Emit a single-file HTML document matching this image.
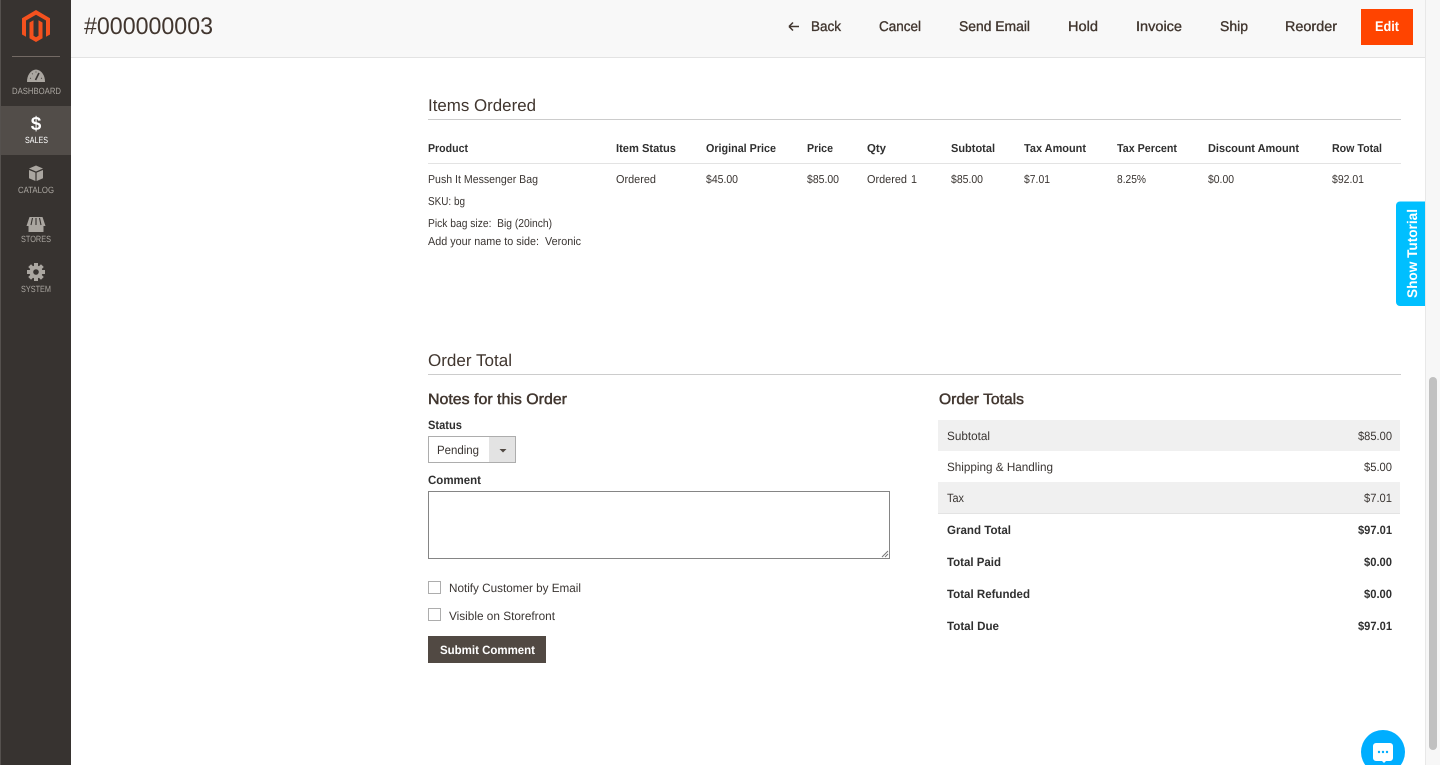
<!DOCTYPE html>
<html><head><meta charset="utf-8"><title>#000000003</title>
<style>
html,body{margin:0;padding:0;background:#fff;overflow:hidden;width:1440px;height:765px}
svg{display:block}
text{font-family:"Liberation Sans",sans-serif;fill:#41362f;text-rendering:geometricPrecision}
.t{font-size:11.5px;fill:#3a3532}
.b{font-size:11.5px;font-weight:700;fill:#303030}
.n{font-size:14px;fill:#41362f;stroke:#41362f;stroke-width:.35px}
.h{font-size:17px;fill:#41362f}
.s{font-size:15px;fill:#41362f;stroke:#41362f;stroke-width:.45px}
.l{font-size:12px;fill:#3a3532}
.lb{font-size:12px;font-weight:700;fill:#303030}
.m{font-size:9px;fill:#aaa6a0}
</style></head><body>
<svg width="1440" height="765" viewBox="0 0 1440 765" xmlns="http://www.w3.org/2000/svg">
<rect width="1440" height="765" fill="#fff"/>
<!-- scrollbar -->
<rect x="1425" y="0" width="15" height="765" fill="#f7f7f7"/>
<rect x="1425" y="0" width="1" height="765" fill="#e8e8e8"/>
<rect x="1429" y="377" width="8" height="373" rx="4" fill="#c1c1c1"/>
<!-- header -->
<rect x="71" y="0" width="1354" height="57" fill="#f8f8f8"/>
<rect x="71" y="57" width="1354" height="1" fill="#e3e3e3"/>
<text x="84" y="34" font-size="24" textLength="129" lengthAdjust="spacingAndGlyphs" style="fill:#41362f">#000000003</text>
<path d="M789 26.500H799M789 26.500L793 22.500M789 26.500L793 30.500" stroke="#41362f" stroke-width="1.500" fill="none"/>
<text class="n" x="811" y="31" textLength="30" lengthAdjust="spacingAndGlyphs">Back</text>
<text class="n" x="879" y="31" textLength="42" lengthAdjust="spacingAndGlyphs">Cancel</text>
<text class="n" x="959" y="31" textLength="71" lengthAdjust="spacingAndGlyphs">Send Email</text>
<text class="n" x="1068" y="31" textLength="30" lengthAdjust="spacingAndGlyphs">Hold</text>
<text class="n" x="1136" y="31" textLength="46" lengthAdjust="spacingAndGlyphs">Invoice</text>
<text class="n" x="1220" y="31" textLength="28" lengthAdjust="spacingAndGlyphs">Ship</text>
<text class="n" x="1285" y="31" textLength="52" lengthAdjust="spacingAndGlyphs">Reorder</text>
<rect x="1361" y="9" width="52" height="36" fill="#ff4400"/>
<text x="1375" y="31" font-size="14" font-weight="700" textLength="24" lengthAdjust="spacingAndGlyphs" style="fill:#fff">Edit</text>
<!-- sidebar -->
<rect x="0" y="0" width="71" height="765" fill="#373330"/>
<rect x="0" y="0" width="1" height="765" fill="#55514e"/>
<rect x="1" y="106" width="70" height="49" fill="#524d49"/>
<path d="M36 10L50 18.200V34.500L46 36.800V20.500L36 14.700L26 20.500V36.800L22 34.500V18.200Z" fill="#f4511e"/>
<path d="M36 42L29.500 38.200V22.500L33.500 20.200V35.800L36 37.300L38.500 35.800V20.200L42.500 22.500V38.200Z" fill="#f4511e"/>
<rect x="12" y="56" width="48" height="1" fill="#736a64"/>
<!-- dashboard icon -->
<path d="M27 82A9.500 12 0 0 1 36 69.500A9.500 12 0 0 1 45 82Z" fill="#aaa6a0"/>
<path d="M35.500 80L39 73" stroke="#373330" stroke-width="1.600"/>
<path d="M30 78.500L31 78M32 73.500L32.700 74.200M36 71.500V72.500M42 78.500L41 78" stroke="#373330" stroke-width=".8"/>
<text class="m" x="12" y="94" textLength="49" lengthAdjust="spacingAndGlyphs">DASHBOARD</text>
<!-- sales -->
<text x="36" y="130" font-size="19" font-weight="700" text-anchor="middle" style="fill:#fff">$</text>
<text class="m" x="25" y="143" textLength="23" lengthAdjust="spacingAndGlyphs" style="fill:#fff">SALES</text>
<!-- catalog -->
<path d="M36 165.500L43 168.500L36 171.500L29 168.500Z" fill="#aaa6a0"/>
<path d="M29 170L35.400 172.600V181L29 178.200Z" fill="#aaa6a0"/>
<path d="M43 170L36.600 172.600V181L43 178.200Z" fill="#aaa6a0"/>
<text class="m" x="18" y="193" textLength="36" lengthAdjust="spacingAndGlyphs">CATALOG</text>
<!-- stores -->
<path d="M29.500 217H42.500L45.500 226H26.500Z" fill="#aaa6a0"/>
<path d="M32.500 218L31 225M36 218V225M39.500 218L41 225" stroke="#373330" stroke-width="1.100"/>
<rect x="28.500" y="226" width="15" height="6" fill="#aaa6a0"/>
<text class="m" x="21" y="242" textLength="30" lengthAdjust="spacingAndGlyphs">STORES</text>
<!-- system -->
<g transform="translate(36 272)">
<circle r="6.500" fill="#aaa6a0"/>
<g fill="#aaa6a0"><rect x="-2" y="-9" width="4" height="18"/><rect x="-2" y="-9" width="4" height="18" transform="rotate(45)"/><rect x="-2" y="-9" width="4" height="18" transform="rotate(90)"/><rect x="-2" y="-9" width="4" height="18" transform="rotate(135)"/></g>
<circle r="2.800" fill="#373330"/>
</g>
<text class="m" x="21" y="292" textLength="30" lengthAdjust="spacingAndGlyphs">SYSTEM</text>
<!-- items ordered -->
<text class="h" x="428" y="111" textLength="108" lengthAdjust="spacingAndGlyphs">Items Ordered</text>
<rect x="428" y="119" width="973" height="1" fill="#cccccc"/>
<text class="b" x="428" y="152" textLength="40" lengthAdjust="spacingAndGlyphs">Product</text>
<text class="b" x="616" y="152" textLength="60" lengthAdjust="spacingAndGlyphs">Item Status</text>
<text class="b" x="706" y="152" textLength="70" lengthAdjust="spacingAndGlyphs">Original Price</text>
<text class="b" x="807" y="152" textLength="26" lengthAdjust="spacingAndGlyphs">Price</text>
<text class="b" x="867" y="152" textLength="19" lengthAdjust="spacingAndGlyphs">Qty</text>
<text class="b" x="951" y="152" textLength="44" lengthAdjust="spacingAndGlyphs">Subtotal</text>
<text class="b" x="1024" y="152" textLength="62" lengthAdjust="spacingAndGlyphs">Tax Amount</text>
<text class="b" x="1117" y="152" textLength="60" lengthAdjust="spacingAndGlyphs">Tax Percent</text>
<text class="b" x="1208" y="152" textLength="91" lengthAdjust="spacingAndGlyphs">Discount Amount</text>
<text class="b" x="1332" y="152" textLength="50" lengthAdjust="spacingAndGlyphs">Row Total</text>
<rect x="428" y="163" width="973" height="1" fill="#e3e3e3"/>
<text class="t" x="428" y="183" textLength="110" lengthAdjust="spacingAndGlyphs">Push It Messenger Bag</text>
<text class="t" x="616" y="183" textLength="40" lengthAdjust="spacingAndGlyphs">Ordered</text>
<text class="t" x="706" y="183" textLength="32" lengthAdjust="spacingAndGlyphs">$45.00</text>
<text class="t" x="807" y="183" textLength="32" lengthAdjust="spacingAndGlyphs">$85.00</text>
<text class="t" x="867" y="183" textLength="40" lengthAdjust="spacingAndGlyphs">Ordered</text>
<text class="t" x="911" y="183" textLength="6" lengthAdjust="spacingAndGlyphs">1</text>
<text class="t" x="951" y="183" textLength="32" lengthAdjust="spacingAndGlyphs">$85.00</text>
<text class="t" x="1024" y="183" textLength="26" lengthAdjust="spacingAndGlyphs">$7.01</text>
<text class="t" x="1117" y="183" textLength="29" lengthAdjust="spacingAndGlyphs">8.25%</text>
<text class="t" x="1208" y="183" textLength="26" lengthAdjust="spacingAndGlyphs">$0.00</text>
<text class="t" x="1332" y="183" textLength="32" lengthAdjust="spacingAndGlyphs">$92.01</text>
<text class="t" x="428" y="205" textLength="37" lengthAdjust="spacingAndGlyphs">SKU: bg</text>
<text class="t" x="428" y="227" xml:space="preserve" textLength="124" lengthAdjust="spacingAndGlyphs">Pick bag size:  Big (20inch)</text>
<text class="t" x="428" y="245" xml:space="preserve" textLength="153" lengthAdjust="spacingAndGlyphs">Add your name to side:  Veronic</text>
<!-- order total -->
<text class="h" x="428" y="366" textLength="84" lengthAdjust="spacingAndGlyphs">Order Total</text>
<rect x="428" y="374" width="973" height="1" fill="#cccccc"/>
<text class="s" x="428" y="404" textLength="139" lengthAdjust="spacingAndGlyphs">Notes for this Order</text>
<text class="s" x="939" y="404" textLength="85" lengthAdjust="spacingAndGlyphs">Order Totals</text>
<text class="lb" x="428" y="429" textLength="34" lengthAdjust="spacingAndGlyphs">Status</text>
<rect x="428.500" y="436.500" width="87" height="26" fill="#fff" stroke="#adadad"/>
<rect x="489" y="437" width="26" height="25" fill="#e3e3e3"/>
<path d="M499.500 449H506.500L503 452.500Z" fill="#514943"/>
<text class="l" x="437" y="454" textLength="42" lengthAdjust="spacingAndGlyphs">Pending</text>
<text class="lb" x="428" y="484" textLength="53" lengthAdjust="spacingAndGlyphs">Comment</text>
<rect x="428.500" y="491.500" width="461" height="67" fill="#fff" stroke="#858585"/>
<path d="M882 557L888 551M885 557L888 554" stroke="#777" stroke-width="1"/>
<rect x="428.500" y="581.500" width="12" height="12" fill="#fff" stroke="#adadad"/>
<text class="l" x="449" y="592" textLength="132" lengthAdjust="spacingAndGlyphs">Notify Customer by Email</text>
<rect x="428.500" y="608.500" width="12" height="12" fill="#fff" stroke="#adadad"/>
<text class="l" x="449" y="620" textLength="106" lengthAdjust="spacingAndGlyphs">Visible on Storefront</text>
<rect x="428" y="636" width="118" height="27" fill="#514943"/>
<text x="440" y="654" font-size="12" font-weight="700" textLength="95" lengthAdjust="spacingAndGlyphs" style="fill:#fff">Submit Comment</text>
<!-- totals -->
<rect x="938" y="420" width="462" height="31" fill="#f0f0f0"/>
<rect x="938" y="482" width="462" height="31" fill="#f0f0f0"/>
<rect x="938" y="513" width="462" height="1" fill="#e3e3e3"/>
<text class="l" x="947" y="440" textLength="43" lengthAdjust="spacingAndGlyphs">Subtotal</text>
<text class="l" x="1358" y="440" textLength="34" lengthAdjust="spacingAndGlyphs">$85.00</text>
<text class="l" x="947" y="471" textLength="106" lengthAdjust="spacingAndGlyphs">Shipping &amp; Handling</text>
<text class="l" x="1364" y="471" textLength="28" lengthAdjust="spacingAndGlyphs">$5.00</text>
<text class="l" x="947" y="502" textLength="17" lengthAdjust="spacingAndGlyphs">Tax</text>
<text class="l" x="1364" y="502" textLength="28" lengthAdjust="spacingAndGlyphs">$7.01</text>
<text class="lb" x="947" y="534" textLength="64" lengthAdjust="spacingAndGlyphs">Grand Total</text>
<text class="lb" x="1358" y="534" textLength="34" lengthAdjust="spacingAndGlyphs">$97.01</text>
<text class="lb" x="947" y="566" textLength="54" lengthAdjust="spacingAndGlyphs">Total Paid</text>
<text class="lb" x="1364" y="566" textLength="28" lengthAdjust="spacingAndGlyphs">$0.00</text>
<text class="lb" x="947" y="598" textLength="83" lengthAdjust="spacingAndGlyphs">Total Refunded</text>
<text class="lb" x="1364" y="598" textLength="28" lengthAdjust="spacingAndGlyphs">$0.00</text>
<text class="lb" x="947" y="630" textLength="52" lengthAdjust="spacingAndGlyphs">Total Due</text>
<text class="lb" x="1358" y="630" textLength="34" lengthAdjust="spacingAndGlyphs">$97.01</text>
<!-- tutorial tab -->
<path d="M1425 201.500H1400A4 4 0 0 0 1396 205.500V302A4 4 0 0 0 1400 306H1425Z" fill="#00bfff"/>
<text transform="translate(1417 298) rotate(-90)" font-size="14" font-weight="700" textLength="89" lengthAdjust="spacingAndGlyphs" style="fill:#fff">Show Tutorial</text>
<!-- chat -->
<circle cx="1383" cy="752" r="22" fill="#00aeff"/>
<path d="M1376 743H1390A3 3 0 0 1 1393 746V758A3 3 0 0 1 1390 761H1386L1384 763L1382 761H1376A3 3 0 0 1 1373 758V746A3 3 0 0 1 1376 743Z" fill="#fff"/>
<circle cx="1379" cy="752" r="1.200" fill="#00aeff"/><circle cx="1383" cy="752" r="1.200" fill="#00aeff"/><circle cx="1387" cy="752" r="1.200" fill="#00aeff"/>
</svg>
</body></html>
